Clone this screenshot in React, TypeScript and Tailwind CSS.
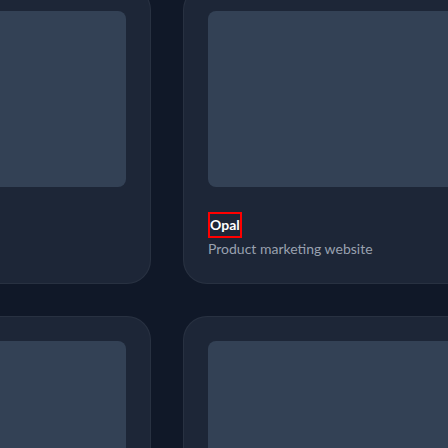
import React from 'react';

type Project = { name: string; description: string; highlight?: boolean };

const projects: Project[] = [
  { name: 'Aurora', description: 'Brand site' },
  { name: 'Opal', description: 'Product marketing website', highlight: true },
  { name: 'Summit', description: 'Microsite' },
  { name: 'Harbor', description: 'Dashboard' },
];

const ProjectCard = ({ project }: { project: Project }) => {
  return <div className="rounded-3xl bg-[#1d2637] border border-white/5 p-6">
      <div className="h-[176px] w-full rounded-lg bg-[#334155]"></div>
      <div className="mt-6">
        <h3 className="h-6 text-sm leading-6 font-bold text-white">
          {/* debug highlight on the active card */}
          <span className={project.highlight ? 'inline-block align-top mt-[3px] ml-0.5 leading-[22px] outline-2 outline-[#ff0000]' : ''}>{project.name}</span>
        </h3>
        <p className="mt-1 text-sm leading-5 text-[#99a1af]">{project.description}</p>
      </div>
    </div>;
};

const App = () => {
  return <div className="h-[448px] w-[448px] overflow-hidden bg-[#101828]" style={{ fontFamily: 'Lato, "Noto Sans", sans-serif' }}>
      <div className="ml-[-269px] mt-[-14px] grid grid-cols-[420px_420px] gap-8">
        {projects.map(p => <ProjectCard key={p.name} project={p} />)}
      </div>
    </div>;
};

export default App;
